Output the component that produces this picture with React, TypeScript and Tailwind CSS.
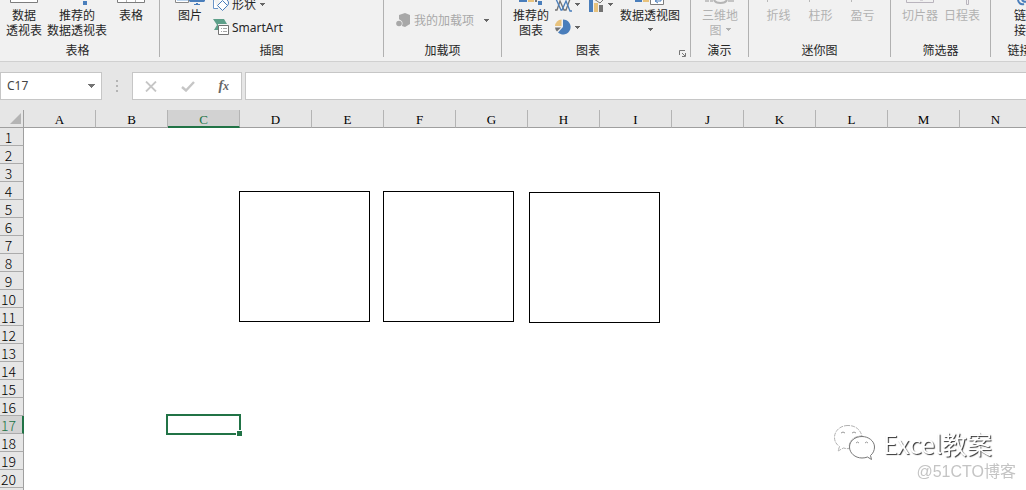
import React from 'react';
import clsx from 'clsx';

const COLUMNS = ['A', 'B', 'C', 'D', 'E', 'F', 'G', 'H', 'I', 'J', 'K', 'L', 'M', 'N'];
const ROWS = Array.from({ length: 21 }, (_, i) => i + 1);
const ACTIVE_COLUMN = 'C';
const ACTIVE_ROW = 17;

function Caret({ className = 'text-[#666666]' }: { className?: string }) {
  return (
    <svg width="5" height="3" viewBox="0 0 5 3" className={clsx('shrink-0', className)} aria-hidden="true">
      <path d="M0 0h5v1H4v1H3v1H2V2H1V1H0z" fill="currentColor" />
    </svg>
  );
}

interface GroupProps {
  label: string;
  className: string;
  children: React.ReactNode;
  launcher?: boolean;
}

function Group({ label, className, children, launcher = false }: GroupProps) {
  return (
    <section
      aria-label={label}
      className={clsx('relative flex h-[57px] shrink-0 flex-col border-r border-[#b1b1b1]', className)}
    >
      <div className="flex h-[42px] shrink-0 items-start">{children}</div>
      <div className="shrink-0 text-center leading-4 whitespace-nowrap">{label}</div>
      {launcher && (
        <button className="absolute right-1 bottom-0" aria-label={`${label}选项`}>
          <svg width="7" height="7" viewBox="0 0 7 7" fill="none" stroke="#777777">
            <path d="M.5 5V.5H6M3 3l3 3M6.500 3v3.500H3" />
          </svg>
        </button>
      )}
    </section>
  );
}

interface BigButtonProps {
  lines: string[];
  className?: string;
  icon?: React.ReactNode;
  caret?: 'inline' | 'below';
  disabled?: boolean;
}

function BigButton({ lines, className, icon, caret, disabled = false }: BigButtonProps) {
  return (
    <button
      disabled={disabled}
      className={clsx(
        'flex shrink-0 flex-col items-center leading-[15px] whitespace-nowrap',
        disabled && 'text-[#b1b1b1]',
        className
      )}
    >
      <span className="flex h-[7px] items-start">{icon}</span>
      {lines.map((line, i) => (
        <span key={line} className="flex items-center gap-1">
          {line}
          {caret === 'inline' && i === lines.length - 1 && <Caret className="text-[#b1b1b1]" />}
        </span>
      ))}
      {caret === 'below' && (
        <span className="flex h-[15px] items-center">
          <Caret />
        </span>
      )}
    </button>
  );
}

function TableIcon({ columns = false }: { columns?: boolean }) {
  return (
    <svg width="28" height="3" viewBox="0 0 28 3" fill="#fff" stroke="#7d7d7d">
      <path d="M.5-1v3.500h27V-1" />
      {columns && <path d="M9.500 0v2M18.500 0v2" stroke="#b1b1b1" />}
    </svg>
  );
}

function PictureIcon() {
  return (
    <svg width="30" height="6" viewBox="0 0 30 6">
      <path d="M.5-1v3.500h13V-1" fill="#fff" stroke="#8a8a8a" />
      <path d="M2 0h11v1H2z" fill="#bcd5ee" />
      <path d="M14 0h16v1l-1 1H15l-1-1z" fill="#4a7ebb" />
      <path d="M21 3h2v1h2v1h-6V4h2z" fill="#4a7ebb" />
    </svg>
  );
}

function ShapesIcon() {
  return (
    <svg width="17" height="12" viewBox="0 0 17 12" fill="#fff" stroke="#4a7ebb">
      <path d="M5-1h7a4 4 0 0 1 3 6l-3 3" />
      <path d="M.5-1v9.500H5" stroke="#6a94c8" />
      <path d="M9.500.5l5 5-5 5-5-5z" />
    </svg>
  );
}

function SmartArtIcon() {
  return (
    <svg width="17" height="17" viewBox="0 0 17 17">
      <path d="M0 0h11l3 5H5v6H1l3-5z" fill="#5d9f89" />
      <path d="M5.500 6.500h10v9h-10z" fill="#fff" stroke="#737373" />
      <path d="M8 9.500h1M10 9.500h4M8 12.500h1M10 12.500h4" stroke="#a5a5a5" />
    </svg>
  );
}

function AddInIcon() {
  return (
    <svg width="15" height="15" viewBox="0 0 15 15" fill="#a8a8a8">
      <path d="M9 0l5 2v9l-5 3-3-1V9L3 6V2z" />
      <circle cx="3" cy="10.500" r="3.500" fill="#f1f1f1" />
      <circle cx="3" cy="10.500" r="2.800" />
    </svg>
  );
}

function ScatterLinesIcon() {
  return (
    <svg width="17" height="12" viewBox="0 0 17 12" fill="none" strokeWidth="1.300">
      <path d="M0 10h2l3-9 4 9h2l4-11" stroke="#737373" />
      <path d="M1-1l5 11h1l4-9 4 10h2" stroke="#4a7ebb" />
    </svg>
  );
}

function ComboIcon() {
  return (
    <svg width="16" height="12" viewBox="0 0 16 12">
      <path d="M0 0h4v12H0z" fill="#4a7ebb" />
      <path d="M5 3h4v9H5z" fill="#e8c27c" />
      <path d="M10 5h4v7h-4z" fill="#737373" />
      <path d="M5-1l6 4 3-3" fill="none" stroke="#737373" />
    </svg>
  );
}

function PieIcon() {
  return (
    <svg width="16" height="16" viewBox="0 0 16 16">
      <path d="M8 8V.5a7.500 7.500 0 1 1-5 13z" fill="#4a7ebb" />
      <path d="M6.500 7V.5A7 7 0 0 0 0 7z" fill="#e8c27c" />
      <path d="M0 8.500h6L2 12.500a7 7 0 0 1-2-4z" fill="#737373" />
    </svg>
  );
}

function Ribbon() {
  return (
    <header className="flex h-[62px] overflow-hidden border-b border-[#d0d0d0] bg-[#f1f1f1] text-xs text-[#262626]">
      <Group label="表格" className="w-[160px] pr-1">
        <BigButton lines={['数据', '透视表']} className="ml-1.5 w-9" icon={<TableIcon />} />
        <BigButton
          lines={['推荐的', '数据透视表']}
          className="ml-[5px] w-[60px]"
          icon={
            <svg width="4" height="5" className="ml-4">
              <path d="M0 1h4v4H0z" fill="#4a7ebb" />
            </svg>
          }
        />
        <BigButton lines={['表格']} className="ml-2.5 w-7" icon={<TableIcon columns />} />
      </Group>

      <Group label="插图" className="w-[224px]">
        <BigButton lines={['图片']} className="ml-[15px] w-[30px]" icon={<PictureIcon />} />
        <div className="ml-2 flex flex-col">
          <button className="flex h-[12px] items-start gap-0.5 whitespace-nowrap">
            <ShapesIcon />
            <span className="-mt-1 leading-4">形状</span>
            <span className="ml-0.5 flex h-2 items-center">
              <Caret />
            </span>
          </button>
          <button className="mt-[7px] flex h-[17px] items-center gap-0.5">
            <SmartArtIcon />
            <span className="font-['Noto_Sans',sans-serif]">SmartArt</span>
          </button>
        </div>
      </Group>

      <Group label="加载项" className="w-[118px]">
        <button className="mt-3 ml-3 flex h-4 items-center whitespace-nowrap text-[#a8a8a8]">
          <AddInIcon />
          <span className="ml-[3px]">我的加载项</span>
          <Caret className="ml-2.5 text-[#666666]" />
        </button>
      </Group>

      <Group label="图表" className="w-[189px] pr-4" launcher>
        <BigButton
          lines={['推荐的', '图表']}
          className="ml-[11px] w-9"
          icon={
            <svg width="24" height="5" viewBox="0 0 24 5">
              <path d="M0 0h8v2H0z" fill="#4a7ebb" />
              <path d="M9 0h6v2H9z" fill="#e8c27c" />
              <path d="M16 0h2v2h-2z" fill="#737373" />
              <path d="M19 1h4v4h-4z" fill="#4a7ebb" />
            </svg>
          }
        />
        <div className="ml-1.5 flex flex-col gap-[7px]">
          <div className="flex gap-[9px]">
            <button className="flex h-3 items-start gap-[3px]" aria-label="散点图">
              <ScatterLinesIcon />
              <Caret className="mt-[3px] text-[#666666]" />
            </button>
            <button className="flex h-3 items-start gap-[3px]" aria-label="组合图">
              <ComboIcon />
              <Caret className="mt-[3px] text-[#666666]" />
            </button>
          </div>
          <button className="flex h-4 items-center gap-1" aria-label="饼图">
            <PieIcon />
            <Caret />
          </button>
        </div>
        <BigButton
          lines={['数据透视图']}
          className="ml-[7px] w-[60px]"
          caret="below"
          icon={
            <svg width="30" height="5" viewBox="0 0 30 5">
              <path d="M0 0h7v2H0z" fill="#4a7ebb" />
              <path d="M8 0h6v2H8z" fill="#e8c27c" />
              <path d="M15.500-1v5.500h13V-1" fill="#fff" stroke="#7d7d7d" />
              <path d="M26 0v1h-5M23-1l-3 2 3 2" fill="none" stroke="#4a7ebb" />
            </svg>
          }
        />
      </Group>

      <Group label="演示" className="w-[58px]">
        <BigButton
          disabled
          lines={['三维地', '图']}
          className="ml-[11px] w-9"
          caret="inline"
          icon={
            <svg width="30" height="4" viewBox="0 0 30 4" fill="#c4c4c4">
              <path d="M0 0h4v2H0zM5 0h3v2H5zM23 0h6v2h-6z" />
              <path d="M9 0c2 4 11 4 13 0" fill="none" stroke="#b5b5b5" strokeWidth="2" />
            </svg>
          }
        />
      </Group>

      <Group label="迷你图" className="w-[142px]">
        {['折线', '柱形', '盈亏'].map((name) => (
          <BigButton
            key={name}
            disabled
            lines={[name]}
            className="ml-[17px] w-[25px]"
            icon={
              <svg width="24" height="2">
                <path d="M0 0h1v2H0z" fill="#b9b9b9" />
              </svg>
            }
          />
        ))}
      </Group>

      <Group label="筛选器" className="w-[100px]">
        <BigButton
          disabled
          lines={['切片器']}
          className="ml-[11px] w-9"
          icon={
            <svg width="28" height="3" viewBox="0 0 28 3" fill="none" stroke="#b9b4bd">
              <path d="M.5-1v3.500h27V-1M14 0h3" />
            </svg>
          }
        />
        <BigButton
          disabled
          lines={['日程表']}
          className="ml-1.5 w-9"
          icon={
            <svg width="4" height="5" viewBox="0 0 4 5" fill="none" stroke="#b9b4bd" className="ml-3">
              <path d="M.5-1v5.500h2V-1" />
            </svg>
          }
        />
      </Group>

      <Group label="链接" className="w-[58px]">
        <BigButton
          lines={['链', '接']}
          className="ml-[23px] w-3"
          icon={
            <svg width="22" height="6" viewBox="0 0 22 6" fill="none" stroke="#4a7ebb" strokeWidth="2" className="ml-2.5">
              <path d="M4-1c0 4 3 6 6 5M8-1c0 2 3 4 6 2l3-3" />
            </svg>
          }
        />
      </Group>
    </header>
  );
}

function FormulaBar() {
  return (
    <div className="flex h-12 items-start bg-[#e6e6e6] pt-2.5">
      <div className="flex h-7 w-[102px] shrink-0 items-center border border-[#c6c6c6] bg-white">
        <input
          aria-label="名称框"
          defaultValue="C17"
          className="w-20 pl-1.5 font-['Noto_Sans',sans-serif] text-xs text-[#444444] outline-none"
        />
        <button aria-label="展开名称框" className="ml-[7px]">
          <svg width="7" height="4" viewBox="0 0 7 4" fill="#737373">
            <path d="M0 0h7v1H6v1H5v1H4v1H3V3H2V2H1V1H0z" />
          </svg>
        </button>
      </div>
      <div className="flex h-7 w-[30px] shrink-0 flex-col items-center justify-center gap-[3px]">
        <i className="size-0.5 bg-[#b4b4b4]" />
        <i className="size-0.5 bg-[#b4b4b4]" />
        <i className="size-0.5 bg-[#b4b4b4]" />
      </div>
      <div className="flex h-7 w-[110px] shrink-0 items-center justify-around border border-[#c6c6c6] bg-white">
        <button aria-label="取消">
          <svg width="12" height="11" viewBox="0 0 12 11" fill="none" stroke="#c6c6c6" strokeWidth="1.800">
            <path d="M1 .5l10 10M11 .5l-10 10" />
          </svg>
        </button>
        <button aria-label="输入">
          <svg width="14" height="11" viewBox="0 0 14 11" fill="none" stroke="#c6c6c6" strokeWidth="2.400">
            <path d="M1 6l4 3.500L13 1" />
          </svg>
        </button>
        <button
          aria-label="插入函数"
          className="font-['Liberation_Serif',serif] text-sm leading-4 font-bold text-[#666666] italic"
        >
          f<span className="text-xs">x</span>
        </button>
      </div>
      <input
        aria-label="编辑栏"
        className="ml-[3px] h-7 min-w-0 flex-1 border border-r-0 border-[#c6c6c6] bg-white px-1.5 text-xs outline-none"
      />
    </div>
  );
}

function Sheet() {
  return (
    <main className="relative overflow-hidden bg-white">
      <div className="bg-[#e6e6e6]">
        <table className="w-max table-fixed border-separate border-spacing-0">
          <thead>
            <tr>
              <th className="h-[18px] w-6 min-w-6 border-r border-b border-[#9f9f9f] p-0" aria-label="全选">
                <svg width="11" height="11" viewBox="0 0 11 11" className="ml-2.5" fill="#b4b4b4">
                  <path d="M11 0v11H0z" />
                </svg>
              </th>
              {COLUMNS.map((col) => (
                <th
                  key={col}
                  scope="col"
                  className={clsx(
                    "h-[18px] w-[72px] min-w-[72px] border-r border-r-[#b4b4b4] p-0 text-center align-top font-['Liberation_Serif',serif] text-[13px] leading-4 font-medium",
                    col === ACTIVE_COLUMN
                      ? 'border-b-2 border-b-[#217346] bg-[#d2d2d2] text-[#217346]'
                      : 'border-b border-b-[#9f9f9f] text-black'
                  )}
                >
                  <div className="h-4 pt-0.5">{col}</div>
                </th>
              ))}
            </tr>
          </thead>
          <tbody>
            {ROWS.map((row) => (
              <tr key={row}>
                <th
                  scope="row"
                  className={clsx(
                    'h-[18px] border-b border-b-[#ababab] py-0 pl-0 text-center text-sm leading-[17px] font-light',
                    row === ACTIVE_ROW
                      ? 'border-r-2 border-r-[#217346] bg-[#d2d2d2] pr-[5px] text-[#217346]'
                      : 'border-r border-r-[#9f9f9f] pr-1.5 text-black'
                  )}
                >
                  <div className="h-[17px] pt-px">{row}</div>
                </th>
                {COLUMNS.map((col) => (
                  <td key={col} className="relative bg-white p-0">
                    {row === ACTIVE_ROW && col === ACTIVE_COLUMN && (
                      <div className="absolute -top-0.5 -right-px -bottom-px -left-0.5 z-10 border-2 border-[#217346]">
                        <span className="absolute -right-[3px] -bottom-[3px] size-1.5 border-t border-l border-white bg-[#217346]" />
                      </div>
                    )}
                  </td>
                ))}
              </tr>
            ))}
          </tbody>
        </table>
      </div>

      {/* Shapes floating over the cells */}
      <div className="absolute top-[81px] left-[239px] size-[131px] border border-black bg-white" />
      <div className="absolute top-[81px] left-[383px] size-[131px] border border-black bg-white" />
      <div className="absolute top-[82px] left-[529px] size-[131px] border border-black bg-white" />
    </main>
  );
}

function Watermark() {
  return (
    <div className="pointer-events-none fixed right-2.5 bottom-2 flex flex-col items-end">
      <div className="mr-6 flex items-center gap-2">
        <svg width="41" height="36" viewBox="0 0 41 36" fill="#fff">
          <path
            d="M14 .5C6 .5.500 6 .500 12.500c0 4 2 7 5 9L4 26l5.500-3c2 .6 4 .8 6 .6C14 16 20 11 28 11 26 4 21 .5 14 .5z"
            stroke="#b0b0b0"
            strokeDasharray="4 1"
          />
          <path
            d="M28 11.500c-7 0-12.500 4.500-12.500 10.500S21 33 28 33c2 0 4-.3 5.500-1l4 2.500-1-4c2.500-2 4-5 4-8.500 0-6-6-10.500-12.500-10.500z"
            stroke="#777777"
          />
          <path d="M7 8q2-2 4 0M18 8q2-2 4 0M22 18q1.500-2 3 0M31 18q1.500-2 3 0" fill="none" stroke="#999999" />
        </svg>
        <span className="text-[25px] leading-9 whitespace-nowrap text-white [text-shadow:1px_1px_1px_#333333]">
          Excel教案
        </span>
      </div>
      <span className="mt-px font-['Liberation_Sans','Noto_Sans_CJK_SC',sans-serif] text-base leading-5 whitespace-nowrap text-[#c4c4c4]">
        @51CTO博客
      </span>
    </div>
  );
}

export default function App() {
  return (
    <div className="h-screen overflow-hidden bg-white font-['Noto_Sans_CJK_SC',sans-serif]">
      <Ribbon />
      <FormulaBar />
      <Sheet />
      <Watermark />
    </div>
  );
}
